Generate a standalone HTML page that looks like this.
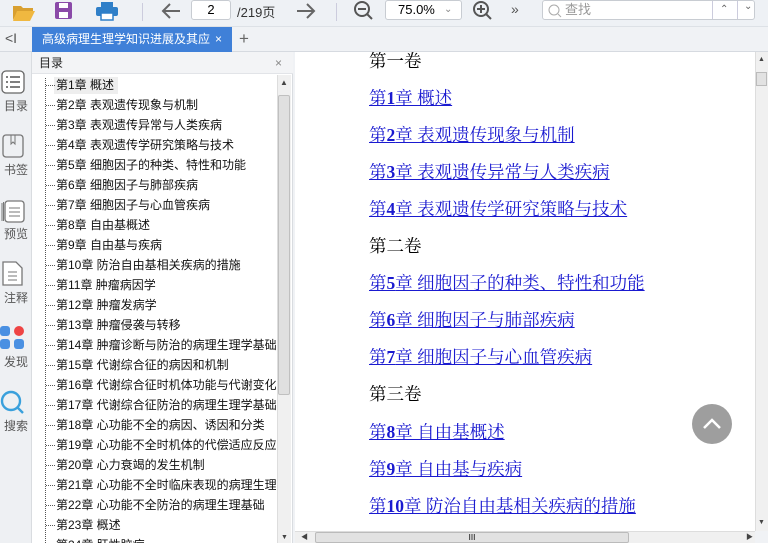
<!DOCTYPE html>
<html><head><meta charset="utf-8"><style>
*{margin:0;padding:0;box-sizing:border-box}
html,body{width:768px;height:543px;overflow:hidden}
body{background:#f0f2f5;font-family:"Liberation Sans","Noto Sans CJK SC",sans-serif;position:relative}
.abs{position:absolute}
#tb{left:0;top:0;width:768px;height:27px;background:#eef1f5;border-bottom:1px solid #dde1e6}
#tabbar{left:0;top:27px;width:768px;height:25px;background:#f0f2f5;border-bottom:1px solid #d6dae0}
#tab{left:32px;top:27px;width:200px;height:25px;background:#3f80d8;color:#fff;font-size:12px;line-height:25px;padding-left:10px}
#side{left:0;top:52px;width:32px;height:491px;background:#eef0f3;border-right:1px solid #d9dce0}
.si{position:absolute;left:0;width:32px;text-align:center;font-size:12px;color:#555}
#toc{left:32px;top:52px;width:261px;height:491px;background:#fff;border-right:1px solid #d9dce0}
#tochead{left:32px;top:52px;width:261px;height:22px;background:#f3f4f6;font-size:12px;line-height:22px;padding-left:7px;color:#222;border-bottom:1px solid #e2e4e8}
.ti{position:absolute;left:56px;font-size:12px;color:#111;white-space:nowrap;line-height:16px}
.dot{position:absolute;left:46px;width:9px;border-top:1px dotted #555}
#content{left:295px;top:52px;width:460px;height:479px;background:#fff}
.cl{position:absolute;left:369px;font-family:"Liberation Serif","Noto Serif CJK SC",serif;font-size:17.5px;white-space:nowrap;line-height:20px}
.lk{color:#1a1ad0;text-decoration:underline}
.lk b{font-weight:bold}
</style></head><body>
<div id="tb" class="abs"></div>
<svg class="abs" style="left:12px;top:2px" width="24" height="20"><path d="M1 4h8l2 2h10v3H6L1 18z" fill="#d9a030"/><path d="M5 9h18l-5 10H1z" fill="#f0b840"/></svg>
<svg class="abs" style="left:54px;top:1px" width="20" height="20"><rect x="1" y="1" width="17" height="17" rx="2" fill="#8a4aa8"/><rect x="5" y="2" width="9" height="5" fill="#fff"/><rect x="5" y="11" width="9" height="6" fill="#fff"/></svg>
<svg class="abs" style="left:95px;top:1px" width="24" height="20"><rect x="6" y="1" width="12" height="5" fill="#2f7fc8"/><rect x="1" y="6" width="22" height="9" rx="2" fill="#2f7fc8"/><rect x="6" y="12" width="12" height="7" fill="#fff" stroke="#2f7fc8" stroke-width="1.5"/></svg>
<div class="abs" style="left:142px;top:3px;width:1px;height:18px;background:#ccd"></div>
<svg class="abs" style="left:160px;top:2px" width="22" height="18"><path d="M20 9H3M10 2L3 9l7 7" stroke="#666" stroke-width="2" fill="none"/></svg>
<div class="abs" style="left:191px;top:0;width:40px;height:20px;background:#fff;border:1px solid #c8ccd2;border-radius:3px;font-size:13px;text-align:center;line-height:18px">2</div>
<div class="abs" style="left:237px;top:2px;font-size:13px;color:#333">/219页</div>
<svg class="abs" style="left:295px;top:2px" width="22" height="18"><path d="M2 9h17M12 2l7 7-7 7" stroke="#666" stroke-width="2" fill="none"/></svg>
<div class="abs" style="left:336px;top:3px;width:1px;height:18px;background:#ccd"></div>
<svg class="abs" style="left:353px;top:0" width="22" height="22"><circle cx="9" cy="9" r="7" stroke="#555" stroke-width="2" fill="none"/><path d="M5 9h8M14 14l5 5" stroke="#555" stroke-width="2"/></svg>
<div class="abs" style="left:385px;top:0;width:77px;height:20px;background:#fff;border:1px solid #c8ccd2;border-radius:3px;font-size:13px;line-height:18px;padding-left:12px">75.0%<span style="position:absolute;left:58px;top:0;color:#888;font-size:10px">&#8964;</span></div>
<svg class="abs" style="left:472px;top:0" width="22" height="22"><circle cx="9" cy="9" r="7" stroke="#555" stroke-width="2" fill="none"/><path d="M5 9h8M9 5v8M14 14l5 5" stroke="#555" stroke-width="2"/></svg>
<div class="abs" style="left:511px;top:1px;font-size:14px;color:#555">»</div>
<div class="abs" style="left:542px;top:0;width:213px;height:20px;background:#fff;border:1px solid #c8ccd2;border-radius:3px;font-size:13px;color:#999;line-height:18px;padding-left:22px">查找
<svg style="position:absolute;left:5px;top:3px" width="14" height="14"><circle cx="6" cy="6" r="5" stroke="#aaa" fill="none"/><path d="M10 10l3 3" stroke="#aaa"/></svg>
<div style="position:absolute;left:169px;top:0;width:1px;height:18px;background:#ccd"></div>
<div style="position:absolute;left:194px;top:0;width:1px;height:18px;background:#ccd"></div>
<span style="position:absolute;left:177px;top:0;color:#666;font-size:10px">&#8963;</span>
<span style="position:absolute;left:201px;top:-3px;color:#666;font-size:10px">&#8964;</span></div>
<div id="tabbar" class="abs"></div>
<div class="abs" style="left:5px;top:30px;font-size:14px;color:#555">&lt;I</div>
<div id="tab" class="abs">高级病理生理学知识进展及其应<span style="position:absolute;left:183px">×</span></div>
<div class="abs" style="left:239px;top:29px;font-size:17px;color:#666">+</div>
<div id="side" class="abs">
<svg class="abs" style="left:1px;top:18px" width="24" height="24"><rect x="1" y="1" width="22" height="22" rx="4" stroke="#666" fill="#fff" stroke-width="1.3"/><path d="M5 7h2M9 7h10M5 12h2M9 12h10M5 17h2M9 17h10" stroke="#555" stroke-width="1.6"/></svg>
<div class="si" style="top:45px">目录</div>
<svg class="abs" style="left:2px;top:82px" width="22" height="24"><rect x="1" y="1" width="20" height="22" rx="3" stroke="#777" fill="none" stroke-width="1.3"/><path d="M9 1v9l2-2 2 2V1" stroke="#777" fill="none"/></svg>
<div class="si" style="top:109px">书签</div>
<svg class="abs" style="left:0;top:146px" width="26" height="26"><rect x="5" y="3" width="19" height="21" rx="3" stroke="#777" fill="#fff" stroke-width="1.3"/><path d="M2 5v18M3.5 4v19M9 10h11M9 14h11M9 18h11" stroke="#777"/></svg>
<div class="si" style="top:173px">预览</div>
<svg class="abs" style="left:2px;top:209px" width="22" height="26"><path d="M1 1h13l6 6v17H1z" stroke="#777" fill="#fff" stroke-width="1.3"/><path d="M6 11h9M6 15h9M6 19h9" stroke="#777"/></svg>
<div class="si" style="top:237px">注释</div>
<svg class="abs" style="left:0;top:273px" width="26" height="26"><rect x="0" y="1" width="10" height="10" rx="3" fill="#4a90e2"/><circle cx="19" cy="6" r="5" fill="#ee4444"/><rect x="0" y="14" width="10" height="10" rx="3" fill="#4a90e2"/><rect x="14" y="14" width="10" height="10" rx="3" fill="#4a90e2"/></svg>
<div class="si" style="top:301px">发现</div>
<svg class="abs" style="left:0;top:338px" width="26" height="26"><circle cx="11" cy="11" r="9" stroke="#3aa0dc" stroke-width="2.4" fill="none"/><path d="M17 17l6 6" stroke="#3aa0dc" stroke-width="2.4"/></svg>
<div class="si" style="top:365px">搜索</div>
</div>
<div id="toc" class="abs"></div>
<div id="tochead" class="abs">目录<span style="position:absolute;left:243px;color:#888">×</span></div>
<div class="abs" style="left:45px;top:78px;height:465px;border-left:1px dotted #555"></div>
<div class="abs" style="left:54px;top:77px;width:64px;height:17px;background:#eeeeee"></div>
<div class="abs" style="left:277px;top:75px;width:14px;height:468px;background:#f0f0f0;border-left:1px solid #ddd"></div>
<div class="abs" style="left:278px;top:95px;width:12px;height:300px;background:#e0e0e0;border:1px solid #c0c0c0;border-radius:2px"></div>
<div class="abs" style="left:280px;top:78px;font-size:8px;color:#444">▲</div>
<div>
<div class="dot" style="top:85px"></div><div class="ti" style="top:77px">第1章 概述</div>
<div class="dot" style="top:105px"></div><div class="ti" style="top:97px">第2章 表观遗传现象与机制</div>
<div class="dot" style="top:125px"></div><div class="ti" style="top:117px">第3章 表观遗传异常与人类疾病</div>
<div class="dot" style="top:145px"></div><div class="ti" style="top:137px">第4章 表观遗传学研究策略与技术</div>
<div class="dot" style="top:165px"></div><div class="ti" style="top:157px">第5章 细胞因子的种类、特性和功能</div>
<div class="dot" style="top:185px"></div><div class="ti" style="top:177px">第6章 细胞因子与肺部疾病</div>
<div class="dot" style="top:205px"></div><div class="ti" style="top:197px">第7章 细胞因子与心血管疾病</div>
<div class="dot" style="top:225px"></div><div class="ti" style="top:217px">第8章 自由基概述</div>
<div class="dot" style="top:245px"></div><div class="ti" style="top:237px">第9章 自由基与疾病</div>
<div class="dot" style="top:265px"></div><div class="ti" style="top:257px">第10章 防治自由基相关疾病的措施</div>
<div class="dot" style="top:285px"></div><div class="ti" style="top:277px">第11章 肿瘤病因学</div>
<div class="dot" style="top:305px"></div><div class="ti" style="top:297px">第12章 肿瘤发病学</div>
<div class="dot" style="top:325px"></div><div class="ti" style="top:317px">第13章 肿瘤侵袭与转移</div>
<div class="dot" style="top:345px"></div><div class="ti" style="top:337px;width:220px;overflow:hidden">第14章 肿瘤诊断与防治的病理生理学基础</div>
<div class="dot" style="top:365px"></div><div class="ti" style="top:357px">第15章 代谢综合征的病因和机制</div>
<div class="dot" style="top:385px"></div><div class="ti" style="top:377px;width:220px;overflow:hidden">第16章 代谢综合征时机体功能与代谢变化</div>
<div class="dot" style="top:405px"></div><div class="ti" style="top:397px;width:220px;overflow:hidden">第17章 代谢综合征防治的病理生理学基础</div>
<div class="dot" style="top:425px"></div><div class="ti" style="top:417px">第18章 心功能不全的病因、诱因和分类</div>
<div class="dot" style="top:445px"></div><div class="ti" style="top:437px;width:220px;overflow:hidden">第19章 心功能不全时机体的代偿适应反应</div>
<div class="dot" style="top:465px"></div><div class="ti" style="top:457px">第20章 心力衰竭的发生机制</div>
<div class="dot" style="top:485px"></div><div class="ti" style="top:477px;width:220px;overflow:hidden">第21章 心功能不全时临床表现的病理生理</div>
<div class="dot" style="top:505px"></div><div class="ti" style="top:497px">第22章 心功能不全防治的病理生理基础</div>
<div class="dot" style="top:525px"></div><div class="ti" style="top:517px">第23章 概述</div>
<div class="dot" style="top:545px"></div><div class="ti" style="top:537px">第24章 肝性脑病</div>
</div>
<div class="abs" style="left:277px;top:395px;width:14px;height:148px;background:#f0f0f0;border-left:1px solid #ddd"></div>
<div class="abs" style="left:281px;top:534px;font-size:7px;color:#444">▼</div>
<div id="content" class="abs"></div>
<div class="cl" style="top:51px">第一卷</div>
<div class="cl lk" style="top:88px">第<b>1</b>章 概述</div>
<div class="cl lk" style="top:125px">第<b>2</b>章 表观遗传现象与机制</div>
<div class="cl lk" style="top:162px">第<b>3</b>章 表观遗传异常与人类疾病</div>
<div class="cl lk" style="top:199px">第<b>4</b>章 表观遗传学研究策略与技术</div>
<div class="cl" style="top:236px">第二卷</div>
<div class="cl lk" style="top:273px">第<b>5</b>章 细胞因子的种类、特性和功能</div>
<div class="cl lk" style="top:310px">第<b>6</b>章 细胞因子与肺部疾病</div>
<div class="cl lk" style="top:347px">第<b>7</b>章 细胞因子与心血管疾病</div>
<div class="cl" style="top:384px">第三卷</div>
<div class="cl lk" style="top:422px">第<b>8</b>章 自由基概述</div>
<div class="cl lk" style="top:459px">第<b>9</b>章 自由基与疾病</div>
<div class="cl lk" style="top:496px">第<b>10</b>章 防治自由基相关疾病的措施</div>
<div class="abs" style="left:692px;top:404px;width:40px;height:40px;border-radius:50%;background:#9e9e9e"></div>
<svg class="abs" style="left:692px;top:404px" width="40" height="40"><path d="M12 24l8-8 8 8" stroke="#fff" stroke-width="2.5" fill="none"/></svg>
<div class="abs" style="left:755px;top:52px;width:13px;height:479px;background:#f0f0f0;border-left:1px solid #ddd"></div>
<div class="abs" style="left:756px;top:72px;width:11px;height:14px;background:#e2e2e2;border:1px solid #bbb"></div>
<div class="abs" style="left:758px;top:56px;font-size:7px;color:#444">▲</div>
<div class="abs" style="left:758px;top:519px;font-size:7px;color:#444">▼</div>
<div class="abs" style="left:295px;top:531px;width:460px;height:12px;background:#f0f0f0;border-top:1px solid #ddd"></div>
<div class="abs" style="left:315px;top:532px;width:314px;height:11px;background:#e2e2e2;border:1px solid #bbb;border-radius:2px;font-size:8px;text-align:center;line-height:9px">III</div>
<div class="abs" style="left:301px;top:532px;font-size:7px;color:#444">◀</div>
<div class="abs" style="left:746px;top:532px;font-size:7px;color:#444">▶</div>
</body></html>
